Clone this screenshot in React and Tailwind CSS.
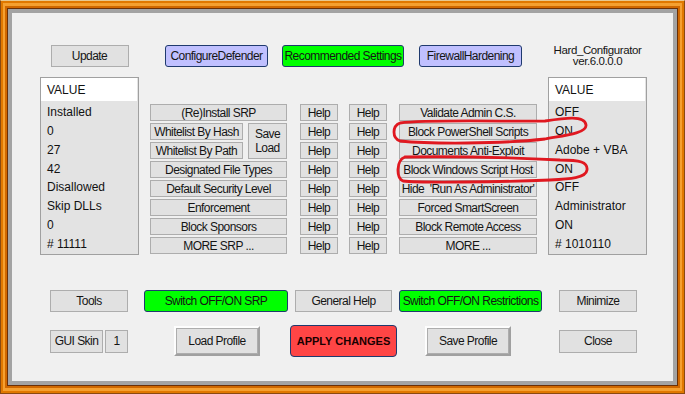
const flat =
  "flex items-center justify-center bg-[#e1e1e1] border border-[#adadad] text-[12px] tracking-[-0.55px] leading-none text-[#151515] whitespace-nowrap";
const blue =
  "flex items-center justify-center bg-[#c0c0ff] border border-[#1f3a6e] rounded-[3px] text-[12px] tracking-[-0.55px] leading-none text-[#151515] whitespace-nowrap";
const green =
  "flex items-center justify-center bg-[#00ff00] border border-[#1f3a6e] rounded-[3px] text-[12px] tracking-[-0.55px] leading-none text-[#151515] whitespace-nowrap";

const leftValues = ["Installed", "0", "27", "42", "Disallowed", "Skip DLLs", "0", "# 11111"];
const rightValues = ["OFF", "ON", "Adobe + VBA", "ON", "OFF", "Administrator", "ON", "# 1010110"];
const rightButtons = [
  "Validate Admin C.S.",
  "Block PowerShell Scripts",
  "Documents Anti-Exploit",
  "Block Windows Script Host",
  "Hide\u00a0 'Run As Administrator'",
  "Forced SmartScreen",
  "Block Remote Access",
  "MORE ...",
];

const ValueList = ({ values }) => (
  <div className="flex h-[178px] w-[99px] flex-col border border-[#a0a0a0] bg-[#e3e3e3]">
    <div className="mr-[1px] flex h-[23px] items-center bg-white px-[6px] text-[12px] text-[#111]">VALUE</div>
    <div className="pt-[2px]">
      {values.map((v, i) => (
        <div key={i} className="flex h-[18.75px] items-center px-[6px] text-[12px] text-[#111] whitespace-nowrap">
          {v}
        </div>
      ))}
    </div>
  </div>
);

const HelpCol = ({ className }) => (
  <div className={`flex w-[38px] flex-col gap-[2px] ${className}`}>
    {Array.from({ length: 8 }).map((_, i) => (
      <div key={i} className={`${flat} h-[17px]`}>
        Help
      </div>
    ))}
  </div>
);

const Raised = ({ children }) => (
  <div className="flex h-[30px] w-[86px] border-2 border-t-[#fdfdfd] border-l-[#fdfdfd] border-r-[#a0a0a0] border-b-[#a0a0a0]">
    <div className={`${flat} flex-1`}>{children}</div>
  </div>
);

export default function App() {
  return (
    <div className="relative h-[394px] w-[685px] overflow-hidden bg-[#2a7fd4] font-['Liberation_Sans',Arial,sans-serif]">
      <div className="h-full w-full border border-[#8a4a10] border-t-[#e8c890]">
        <div className="h-full w-full border-2 border-[#e07800]">
          <div className="h-full w-full border-2 border-t-[3px] border-b-[3px] border-[#f5a030]">
            <div className="h-full w-full border-2 border-[#d06800]">
              <div className="h-full w-full border border-[#6a3008]">
                <div className="h-full w-full border-4 border-[#a3a3a3]">
                  <div className="flex h-full w-full flex-col bg-[#f0f0f0] pl-[28px] pt-[32px]">
                    {/* top section */}
                    <div className="flex items-start">
                      <div className="flex w-[99px] flex-col items-center">
                        <div className={`${flat} h-[22px] w-[78px]`}>Update</div>
                        <div className="mt-[10px]">
                          <ValueList values={leftValues} />
                        </div>
                      </div>

                      <div className="ml-[11px] flex w-[387px] flex-col">
                        <div className="flex h-[22px]">
                          <div className={`${blue} ml-[15px] w-[103px]`}>ConfigureDefender</div>
                          <div className={`${green} ml-[14px] w-[122px]`}>Recommended Settings</div>
                          <div className={`${blue} ml-[15px] w-[103px]`}>FirewallHardening</div>
                        </div>

                        <div className="mt-[37px] flex">
                          <div className="flex w-[137px] flex-col gap-[2px]">
                            <div className={`${flat} h-[17px]`}>(Re)Install SRP</div>
                            <div className="flex">
                              <div className="flex w-[93px] flex-col gap-[2px]">
                                <div className={`${flat} h-[17px]`}>Whitelist By Hash</div>
                                <div className={`${flat} h-[17px]`}>Whitelist By Path</div>
                              </div>
                              <div className={`${flat} ml-auto h-[36px] w-[39px] flex-col text-center`}>
                                <span className="leading-[14px]">Save</span>
                                <span className="leading-[14px]">Load</span>
                              </div>
                            </div>
                            <div className={`${flat} h-[17px]`}>Designated File Types</div>
                            <div className={`${flat} h-[17px]`}>Default Security Level</div>
                            <div className={`${flat} h-[17px]`}>Enforcement</div>
                            <div className={`${flat} h-[17px]`}>Block Sponsors</div>
                            <div className={`${flat} h-[17px]`}>MORE SRP ...</div>
                          </div>
                          <HelpCol className="ml-[13px]" />
                          <HelpCol className="ml-[11px]" />
                          <div className="ml-[12px] flex w-[138px] flex-col gap-[2px]">
                            {rightButtons.map((b) => (
                              <div key={b} className={`${flat} h-[17px]`}>
                                {b}
                              </div>
                            ))}
                          </div>
                        </div>
                      </div>

                      <div className="ml-[11px] flex w-[99px] flex-col">
                        <div className="flex h-[22px] flex-col items-center justify-center text-[11.5px] leading-[11px] tracking-[-0.4px] text-[#151515]">
                          <span>Hard_Configurator</span>
                          <span>ver.6.0.0.0</span>
                        </div>
                        <div className="mt-[10px]">
                          <ValueList values={rightValues} />
                        </div>
                      </div>
                    </div>

                    {/* bottom row 1 */}
                    <div className="mt-[35px] flex h-[22px]">
                      <div className={`${flat} ml-[10px] w-[78px]`}>Tools</div>
                      <div className={`${green} ml-[16px] w-[144px]`}>Switch OFF/ON SRP</div>
                      <div className={`${flat} ml-[7px] w-[97px]`}>General Help</div>
                      <div className={`${green} ml-[7px] w-[143px]`}>Switch OFF/ON Restrictions</div>
                      <div className={`${flat} ml-[17px] w-[78px]`}>Minimize</div>
                    </div>

                    {/* bottom row 2 */}
                    <div className="mt-[13px] flex h-[32px] items-center">
                      <div className={`${flat} ml-[10px] h-[23px] w-[53px] text-[#333]`}>GUI Skin</div>
                      <div className={`${flat} ml-[2px] h-[23px] w-[23px] text-[#5a1a5a]`}>1</div>
                      <div className="ml-[46px]">
                        <Raised>Load Profile</Raised>
                      </div>
                      <div className="ml-[30px] flex h-[32px] w-[107px] items-center justify-center rounded-[4px] border border-[#1f3a6e] bg-[#ff4545] text-[11px] font-bold text-[#1a0000]">
                        APPLY CHANGES
                      </div>
                      <div className="ml-[28px]">
                        <Raised>Save Profile</Raised>
                      </div>
                      <div className={`${flat} ml-[48px] h-[23px] w-[78px]`}>Close</div>
                    </div>
                  </div>
                </div>
              </div>
            </div>
          </div>
        </div>
      </div>

      {/* hand-drawn red marks */}
      <svg className="pointer-events-none absolute left-0 top-0" width="685" height="394" viewBox="0 0 685 394">
        <path
          d="M400 141 C392 138 392 126 400 123 C430 119 520 122 545 121 C565 118 585 115 586 125 C587 134 560 136 545 139 C500 144 430 144 400 141"
          fill="none"
          stroke="#e01820"
          strokeWidth="2.8"
          strokeLinecap="round"
        />
        <path
          d="M405 157 C470 156 540 159 560 160 C580 160 588 162 587 170 C586 178 570 179 550 180 C500 182 420 183 403 181 C396 179 396 160 405 157"
          fill="none"
          stroke="#e01820"
          strokeWidth="2.8"
          strokeLinecap="round"
        />
      </svg>
    </div>
  );
}
